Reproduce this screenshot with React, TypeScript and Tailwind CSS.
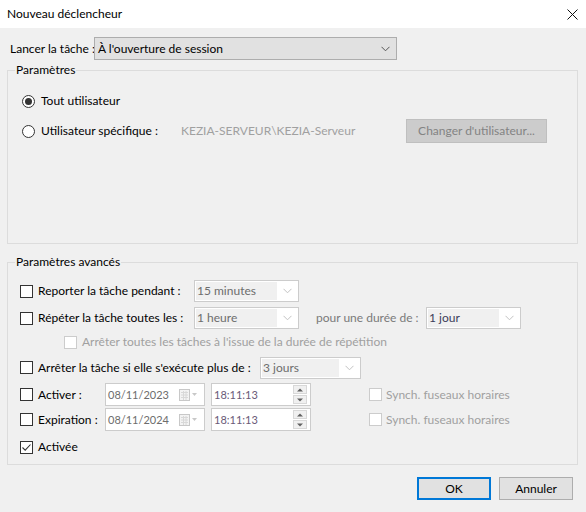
import React from "react";

// Small building blocks for the Windows-like dialog
function Checkbox({ checked = false, disabled = false }: { checked?: boolean; disabled?: boolean }) {
  return (
    <span
      className={
        "flex h-[13px] w-[13px] shrink-0 items-center justify-center border bg-white " +
        (disabled ? "border-[#cccccc]" : "border-[#333333]")
      }
    >
      {checked && (
        <svg width="11" height="11" viewBox="0 0 11 11">
          <path d="M1.5 5.5 L4.2 8.2 L9.5 2.5" fill="none" stroke="#333333" strokeWidth="1.1" />
        </svg>
      )}
    </span>
  );
}

function Radio({ checked = false }: { checked?: boolean }) {
  return (
    <span className="flex h-[13px] w-[13px] shrink-0 items-center justify-center rounded-full border border-[#333333] bg-white">
      {checked && <span className="h-[7px] w-[7px] rounded-full bg-[#333333]" />}
    </span>
  );
}

function Chevron({ color = "#c2c2c2" }: { color?: string }) {
  return (
    <svg width="9" height="6" viewBox="0 0 9 6">
      <path d="M0.5 0.8 L4.5 4.8 L8.5 0.8" fill="none" stroke={color} strokeWidth="1" />
    </svg>
  );
}

function Combo({ value, width, dark = false }: { value: string; width: string; dark?: boolean }) {
  return (
    <div className={"flex h-[22px] items-center border border-[#cccccc] bg-white p-px " + width}>
      <div
        className={
          "flex h-full flex-1 items-center whitespace-nowrap bg-[#f0f0f0] pl-px " +
          (dark ? "text-[#3c3c5a]" : "text-[#6d6d6d]")
        }
      >
        {value}
      </div>
      <div className="flex w-[20px] items-center justify-center">
        <Chevron />
      </div>
    </div>
  );
}

function DateField({ value }: { value: string }) {
  return (
    <div className="flex h-[23px] w-[100px] items-center border border-[#cccccc] bg-white pl-[2px] text-[11px] text-[#6d6d6d]">
      <span className="flex-1">{value}</span>
      <svg width="20" height="12" viewBox="0 0 20 12" className="mr-[5px]">
        <rect x="0.5" y="0.5" width="10" height="11" fill="#f3f3f3" stroke="#c8c8c8" />
        <path d="M2 3.5h7M2 6h7M2 8.5h7M4.5 2v9M7 2v9" stroke="#d8d8d8" strokeWidth="1" />
        <path d="M13 4 L18 4 L15.5 7 Z" fill="#c8c8c8" />
      </svg>
    </div>
  );
}

function TimeField({ value }: { value: string }) {
  return (
    <div className="flex h-[23px] w-[100px] items-center border border-[#cccccc] bg-white pl-[2px] text-[11px] text-[#6a5a78]">
      <span className="flex-1">{value}</span>
      <div className="mr-[3px] flex flex-col gap-px">
        <span className="flex h-[9px] w-[14px] items-center justify-center border border-[#d8d8d8] bg-[#f0f0f0]">
          <svg width="6" height="4" viewBox="0 0 6 4">
            <path d="M0 3.5 L3 0.5 L6 3.5 Z" fill="#606060" />
          </svg>
        </span>
        <span className="flex h-[9px] w-[14px] items-center justify-center border border-[#d8d8d8] bg-[#f0f0f0]">
          <svg width="6" height="4" viewBox="0 0 6 4">
            <path d="M0 0.5 L3 3.5 L6 0.5 Z" fill="#606060" />
          </svg>
        </span>
      </div>
    </div>
  );
}

export default function App() {
  return (
    <div
      className="flex h-[512px] w-[586px] flex-col bg-[#f0f0f0] text-[12px] leading-[16px] text-black"
      style={{ fontFamily: "'Segoe UI', Lato, 'Liberation Sans', sans-serif" }}
    >
      {/* title bar */}
      <div className="flex h-[28px] shrink-0 items-center justify-between bg-white pl-[7px] pr-[8px]">
        <span>Nouveau déclencheur</span>
        <svg width="11" height="11" viewBox="0 0 11 11">
          <path d="M0.5 0.5 L10.5 10.5 M10.5 0.5 L0.5 10.5" stroke="#111" strokeWidth="1" />
        </svg>
      </div>

      <div className="flex flex-1 flex-col pl-[7px] pr-[8px]">
        {/* Lancer la tâche */}
        <div className="mt-[9px] flex h-[23px] items-center">
          <span className="w-[87px] whitespace-nowrap pl-[3px]">Lancer la tâche :</span>
          <div className="flex h-[23px] w-[303px] items-center justify-between border border-[#adadad] bg-[#e1e1e1] pl-[3px] pr-[6px]">
            <span>À l'ouverture de session</span>
            <Chevron color="#555555" />
          </div>
        </div>

        {/* Paramètres */}
        <fieldset className="mt-[2px] h-[182px] border border-[#dcdcdc]">
          <legend className="ml-[7px] px-[1px]">Paramètres</legend>
          <div className="mt-[15px] flex h-[16px] items-center pl-[14px]">
            <Radio checked />
            <span className="ml-[6px]">Tout utilisateur</span>
          </div>
          <div className="mt-[10px] flex h-[24px] items-center pl-[14px]">
            <Radio />
            <span className="ml-[6px] w-[140px]">Utilisateur spécifique :</span>
            <span className="w-[225px] text-[#a0a0a0]">KEZIA-SERVEUR\KEZIA-Serveur</span>
            <div className="flex h-[24px] w-[141px] items-center justify-center border border-[#bfbfbf] bg-[#cccccc] text-[#838383]">
              Changer d'utilisateur...
            </div>
          </div>
        </fieldset>

        {/* Paramètres avancés */}
        <fieldset className="mt-[10px] h-[211px] border border-[#dcdcdc]">
          <legend className="ml-[7px] px-[1px]">Paramètres avancés</legend>
          <div className="mt-[10px] flex flex-col pl-[12px]">
            <div className="flex h-[22px] items-center">
              <Checkbox />
              <span className="ml-[5px] w-[156px]">Reporter la tâche pendant :</span>
              <Combo value="15 minutes" width="w-[105px]" />
            </div>
            <div className="mt-[5px] flex h-[22px] items-center">
              <Checkbox />
              <span className="ml-[5px] w-[156px]">Répéter la tâche toutes les :</span>
              <Combo value="1 heure" width="w-[105px]" />
              <span className="ml-[17px] w-[110px] text-[#7a7a7a]">pour une durée de :</span>
              <Combo value="1 jour" width="w-[95px]" dark />
            </div>
            <div className="mt-[4px] flex h-[18px] items-center pl-[44px]">
              <Checkbox disabled />
              <span className="ml-[5px] text-[#a0a0a0]">
                Arrêter toutes les tâches à l'issue de la durée de répétition
              </span>
            </div>
            <div className="mt-[5px] flex h-[23px] items-center">
              <Checkbox />
              <span className="ml-[5px] w-[222px]">Arrêter la tâche si elle s'exécute plus de :</span>
              <Combo value="3 jours" width="w-[101px]" />
            </div>
            <div className="mt-[4px] flex h-[23px] items-center">
              <Checkbox />
              <span className="ml-[5px] w-[67px]">Activer :</span>
              <DateField value="08/11/2023" />
              <span className="w-[6px]" />
              <TimeField value="18:11:13" />
              <span className="ml-[58px]">
                <Checkbox disabled />
              </span>
              <span className="ml-[4px] text-[#a0a0a0]">Synch. fuseaux horaires</span>
            </div>
            <div className="mt-[2px] flex h-[23px] items-center">
              <Checkbox />
              <span className="ml-[5px] w-[67px]">Expiration :</span>
              <DateField value="08/11/2024" />
              <span className="w-[6px]" />
              <TimeField value="18:11:13" />
              <span className="ml-[58px]">
                <Checkbox disabled />
              </span>
              <span className="ml-[4px] text-[#a0a0a0]">Synch. fuseaux horaires</span>
            </div>
            <div className="mt-[7px] flex h-[18px] items-center">
              <Checkbox checked />
              <span className="ml-[5px]">Activée</span>
            </div>
          </div>
        </fieldset>

        {/* buttons */}
        <div className="mt-[12px] flex justify-end gap-[8px] pr-[5px]">
          <button className="flex h-[23px] w-[74px] items-center justify-center border-2 border-[#0078d7] bg-[#e1e1e1]">
            OK
          </button>
          <button className="flex h-[23px] w-[74px] items-center justify-center border border-[#adadad] bg-[#e1e1e1]">
            Annuler
          </button>
        </div>
      </div>
    </div>
  );
}
